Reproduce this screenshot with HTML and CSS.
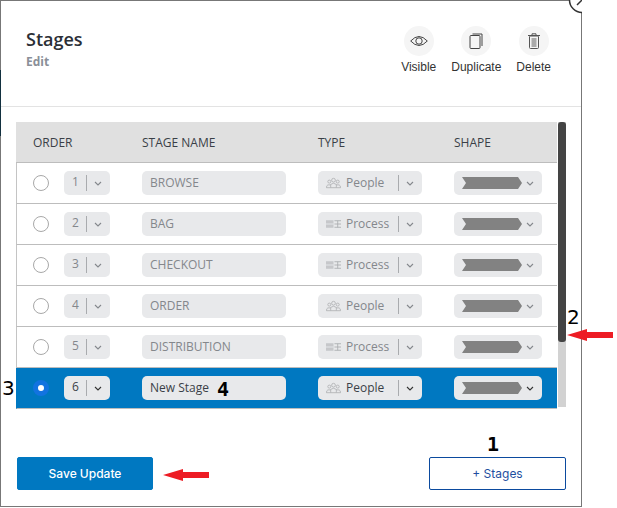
FILE: index.html
```html
<!DOCTYPE html>
<html lang="en">
<head>
    <meta charset="UTF-8">
    <meta name="viewport" content="width=device-width, initial-scale=1.0">
    <title>Stages</title>
    <link rel="stylesheet" href="styles.css">
</head>
<body>
    <svg class="defs" width="0" height="0">
        <symbol id="caret" viewBox="0 0 8 5"><path d="M1 1l3 3 3-3" fill="none" stroke="currentColor" stroke-width="1.1"/></symbol>
        <symbol id="people" viewBox="0 0 16 12">
            <g fill="none" stroke="currentColor" stroke-width=".8">
                <circle cx="8" cy="3" r="2"/><circle cx="3.500" cy="4.500" r="1.600"/><circle cx="12.500" cy="4.500" r="1.600"/>
                <path d="M5 11V7.500q3-2.500 6 0V11zM5 8H2q-1.500 .5-1.500 3H5M11 8h3q1.500 .5 1.500 3H11"/>
            </g>
        </symbol>
        <symbol id="process" viewBox="0 0 16 8">
            <path d="M9 .5h7M9 4h7M9 7.500h7M12.500 .5v7" fill="none" stroke="currentColor" stroke-width=".9"/>
            <path d="M0 0h8v8H0z" fill="currentColor" opacity=".55"/>
            <path d="M0 3.500h8v1H0z" fill="#e8e9eb"/>
        </symbol>
        <symbol id="chevron" viewBox="0 0 60 12"><path d="M0 0h56l4 6-4 6H0l4-6z" fill="#828282"/></symbol>
    </svg>

    <div class="modal">
        <span class="edge-strip"></span>
        <svg class="close" width="15" height="14" viewBox="0 0 15 14">
            <circle cx="15" cy="0" r="12.500" fill="#fff" stroke="#333" stroke-width="1.500"/>
            <path d="M10 5l5-5" stroke="#333" stroke-width="1.500"/>
        </svg>

        <header class="modal-head">
            <div>
                <h1>Stages</h1>
                <p class="sub">Edit</p>
            </div>
            <div class="actions">
                <div class="action">
                    <span class="action-icon">
                        <svg width="18" height="12" viewBox="0 0 18 12"><path d="M.7 6Q9-3 17.300 6 9 15 .7 6z" fill="none" stroke="#444" stroke-width="1"/><circle cx="9" cy="6" r="3.200" fill="none" stroke="#444" stroke-width="1"/></svg>
                    </span>
                    <span>Visible</span>
                </div>
                <div class="action">
                    <span class="action-icon">
                        <svg width="14" height="16" viewBox="0 0 14 16"><path d="M3.500 1h9.500v12" fill="none" stroke="#444" stroke-width="1"/><rect x="1" y="2.500" width="10" height="13" rx="1" fill="#f5f5f5" stroke="#444" stroke-width="1"/></svg>
                    </span>
                    <span>Duplicate</span>
                </div>
                <div class="action">
                    <span class="action-icon">
                        <svg width="12" height="16" viewBox="0 0 12 16"><path d="M0 2.500h12M4 2.500V.8h4v1.700" fill="none" stroke="#555" stroke-width="1"/><rect x="1.500" y="3" width="9" height="12.500" rx="1" fill="none" stroke="#555" stroke-width="1"/><rect x="3.500" y="5" width="5" height="9" fill="#aaa"/></svg>
                    </span>
                    <span>Delete</span>
                </div>
            </div>
        </header>

        <div class="table-wrap">
            <div class="table">
                <div class="row row-head">
                    <div>ORDER</div>
                    <div>STAGE NAME</div>
                    <div>TYPE</div>
                    <div>SHAPE</div>
                </div>

                <div class="row">
                    <div class="order"><span class="radio"></span><span class="field num"><b>1</b><i></i><svg class="caret"><use href="#caret"/></svg></span></div>
                    <div><span class="field name">BROWSE</span></div>
                    <div><span class="field type"><svg class="ico"><use href="#people"/></svg><b>People</b><i></i><svg class="caret"><use href="#caret"/></svg></span></div>
                    <div><span class="field shape"><svg class="chev"><use href="#chevron"/></svg><svg class="caret"><use href="#caret"/></svg></span></div>
                </div>
                <div class="row">
                    <div class="order"><span class="radio"></span><span class="field num"><b>2</b><i></i><svg class="caret"><use href="#caret"/></svg></span></div>
                    <div><span class="field name">BAG</span></div>
                    <div><span class="field type"><svg class="ico ico-process"><use href="#process"/></svg><b>Process</b><i></i><svg class="caret"><use href="#caret"/></svg></span></div>
                    <div><span class="field shape"><svg class="chev"><use href="#chevron"/></svg><svg class="caret"><use href="#caret"/></svg></span></div>
                </div>
                <div class="row">
                    <div class="order"><span class="radio"></span><span class="field num"><b>3</b><i></i><svg class="caret"><use href="#caret"/></svg></span></div>
                    <div><span class="field name">CHECKOUT</span></div>
                    <div><span class="field type"><svg class="ico ico-process"><use href="#process"/></svg><b>Process</b><i></i><svg class="caret"><use href="#caret"/></svg></span></div>
                    <div><span class="field shape"><svg class="chev"><use href="#chevron"/></svg><svg class="caret"><use href="#caret"/></svg></span></div>
                </div>
                <div class="row">
                    <div class="order"><span class="radio"></span><span class="field num"><b>4</b><i></i><svg class="caret"><use href="#caret"/></svg></span></div>
                    <div><span class="field name">ORDER</span></div>
                    <div><span class="field type"><svg class="ico"><use href="#people"/></svg><b>People</b><i></i><svg class="caret"><use href="#caret"/></svg></span></div>
                    <div><span class="field shape"><svg class="chev"><use href="#chevron"/></svg><svg class="caret"><use href="#caret"/></svg></span></div>
                </div>
                <div class="row">
                    <div class="order"><span class="radio"></span><span class="field num"><b>5</b><i></i><svg class="caret"><use href="#caret"/></svg></span></div>
                    <div><span class="field name">DISTRIBUTION</span></div>
                    <div><span class="field type"><svg class="ico ico-process"><use href="#process"/></svg><b>Process</b><i></i><svg class="caret"><use href="#caret"/></svg></span></div>
                    <div><span class="field shape"><svg class="chev"><use href="#chevron"/></svg><svg class="caret"><use href="#caret"/></svg></span></div>
                </div>
                <div class="row row-active">
                    <div class="order"><span class="radio on"></span><span class="field num"><b>6</b><i></i><svg class="caret"><use href="#caret"/></svg></span></div>
                    <div><span class="field name">New Stage</span></div>
                    <div><span class="field type"><svg class="ico"><use href="#people"/></svg><b>People</b><i></i><svg class="caret"><use href="#caret"/></svg></span></div>
                    <div><span class="field shape"><svg class="chev"><use href="#chevron"/></svg><svg class="caret"><use href="#caret"/></svg></span></div>
                </div>
            </div>
            <div class="scrollbar"><div class="thumb"></div></div>
        </div>

        <footer class="modal-foot">
            <button class="btn btn-save">Save Update</button>
            <button class="btn btn-add">+ Stages</button>
        </footer>
    </div>

    <!-- numbers and arrows drawn on top of the shot -->
    <span class="note note-1">1</span>
    <span class="note note-2">2</span>
    <span class="note note-3">3</span>
    <span class="note note-4">4</span>
    <svg class="arrow arrow-save" width="46" height="14" viewBox="0 0 46 14"><path d="M0 7l20-6v3h26v6H20v3z" fill="#ed1c24"/></svg>
    <svg class="arrow arrow-bar" width="46" height="14" viewBox="0 0 46 14"><path d="M0 7l20-6v3h26v6H20v3z" fill="#ed1c24"/></svg>
</body>
</html>
```

FILE: styles.css
```css
body {
    margin: 0;
    background-color: #fff;
    font-family: "Open Sans", sans-serif;
    font-size: 12px;
    color: #333;
}

.defs {
    position: absolute;
}

.modal {
    position: relative;
    box-sizing: border-box;
    width: 582px;
    height: 507px;
    border: 1px solid #777;
    background-color: #fff;
}

.edge-strip {
    position: absolute;
    left: -1px;
    top: 69px;
    width: 1px;
    height: 66px;
    background-color: #12303f;
}

.close {
    position: absolute;
    top: -1px;
    right: -1px;
}

.modal-head {
    display: flex;
    justify-content: space-between;
    box-sizing: border-box;
    height: 106px;
    padding: 25px 30px 0 25px;
    border-bottom: 1px solid #e3e3e3;
}

.modal-head h1 {
    margin: 1px 0 0;
    font-size: 18px;
    line-height: 24px;
    font-weight: 600;
    color: #2b2f36;
}

.sub {
    margin: 3px 0 0;
    font-size: 12px;
    line-height: 16px;
    font-weight: 700;
    color: #8a8f98;
}

.actions {
    display: flex;
    gap: 15px;
}

.action {
    display: flex;
    flex-direction: column;
    align-items: center;
    gap: 4px;
    font-family: "Liberation Sans", Arial, sans-serif;
    font-size: 12px;
    line-height: 14px;
    color: #333;
}

.action-icon {
    display: flex;
    align-items: center;
    justify-content: center;
    width: 30px;
    height: 30px;
    border-radius: 50%;
    background-color: #f5f5f5;
}

.table-wrap {
    display: flex;
    align-items: flex-start;
    margin: 15px 0 0 15px;
}

.table {
    width: 541px;
}

.row {
    display: grid;
    grid-template-columns: 125px 176px 136px 1fr;
    align-items: center;
    height: 41px;
    box-sizing: border-box;
    border-left: 1px solid #c4c4c4;
    border-bottom: 1px solid #bdbdbd;
}

.row > div:first-child {
    padding-left: 16px;
}

.row-head {
    background-color: #e0e0e0;
    color: #3a3f47;
    border-left: none;
    padding-left: 1px;
}

.order {
    display: flex;
    align-items: center;
    gap: 15px;
}

.radio {
    box-sizing: border-box;
    width: 16px;
    height: 16px;
    border: 1px solid #a8a8a8;
    border-radius: 50%;
    background-color: #fff;
}

.radio.on {
    border: 5.500px solid #1273e0;
}

.field {
    display: flex;
    align-items: center;
    box-sizing: border-box;
    height: 24px;
    border-radius: 5px;
    background-color: #e8e9eb;
    color: #84878c;
}

.field b {
    margin-bottom: 2px;
    font-weight: 400;
}

.field i {
    width: 1px;
    height: 16px;
    background-color: #a9abae;
}

.num {
    width: 46px;
    padding-left: 8px;
}

.num b {
    margin-bottom: 3px;
}

.num i {
    margin-left: 7px;
}

.num .caret {
    margin-left: 7px;
}

.name {
    width: 144px;
    padding: 0 0 2px 8px;
}

.type {
    width: 104px;
    padding-left: 8px;
}

.type b {
    flex: 1;
    margin-left: 5px;
}

.type .caret {
    margin: 0 8px 0 7px;
}

.shape {
    width: 88px;
    padding-left: 8px;
}

.chev {
    width: 60px;
    height: 12px;
}

.shape .caret {
    margin-left: 4px;
}

.caret {
    width: 8px;
    height: 5px;
    color: #84878c;
}

.ico {
    width: 15px;
    height: 12px;
    color: #a9abae;
}

.ico-process {
    height: 8px;
}

.row-active {
    background-color: #0078c1;
    border-left: 1px solid #0078c1;
}

.row-active .field {
    color: #3a3f47;
}

.row-active .caret {
    color: #333;
}

.scrollbar {
    width: 8px;
    height: 285px;
    margin-left: 1px;
    background-color: #d2d2d2;
}

.thumb {
    height: 220px;
    border-radius: 3px;
    background-color: #444;
}

.modal-foot {
    display: flex;
    justify-content: space-between;
    margin-top: 48px;
    padding: 0 15px 0 16px;
}

.btn {
    box-sizing: border-box;
    height: 33px;
    border-radius: 2px;
    font-family: Inter, sans-serif;
    font-size: 12px;
}

.btn-save {
    width: 136px;
    border: 1px solid #0078c1;
    background-color: #0078c1;
    color: #fff;
    font-weight: 500;
}

.btn-add {
    width: 137px;
    border: 1px solid #0b4a9e;
    background-color: #fff;
    color: #1f4fa0;
}

.note {
    position: absolute;
    font-family: "DejaVu Sans", sans-serif;
    font-size: 20px;
    line-height: 20px;
    color: #000;
}

.note-1 {
    left: 487px;
    top: 434px;
    font-family: "DejaVu Sans Mono", monospace;
    font-weight: 700;
}

.note-2 {
    left: 567px;
    top: 307px;
}

.note-3 {
    left: 2px;
    top: 378px;
}

.note-4 {
    left: 217px;
    top: 379px;
    font-family: "DejaVu Sans Mono", monospace;
    font-weight: 700;
}

.arrow {
    position: absolute;
}

.arrow-save {
    left: 163px;
    top: 468px;
}

.arrow-bar {
    left: 567px;
    top: 328px;
}
```
